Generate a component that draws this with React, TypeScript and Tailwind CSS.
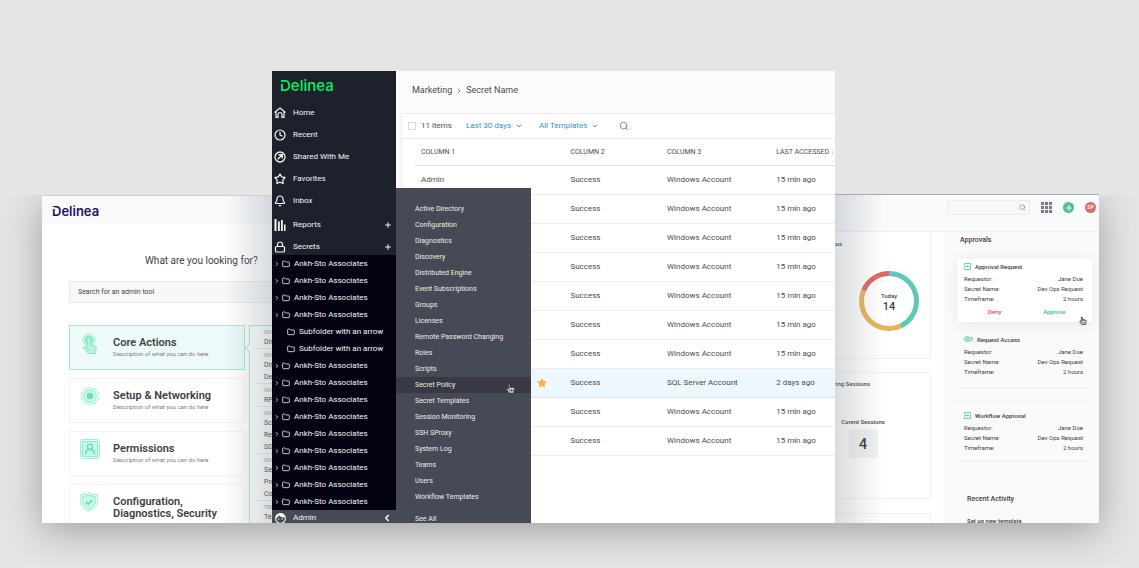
import { Fragment } from "react";
import {
  Bell,
  ChevronDown,
  ChevronLeft,
  ChevronRight,
  Clock,
  Folder,
  Lock,
  Plus,
  Search,
  Star,
} from "lucide-react";
import { FaHandPointer, FaRegHandPointer } from "react-icons/fa";
import { MdFace } from "react-icons/md";

const folders = [
  { name: "Ankh-Sto Associates" },
  { name: "Ankh-Sto Associates" },
  { name: "Ankh-Sto Associates" },
  { name: "Ankh-Sto Associates" },
  { name: "Subfolder with an arrow", child: true },
  { name: "Subfolder with an arrow", child: true },
  { name: "Ankh-Sto Associates" },
  { name: "Ankh-Sto Associates" },
  { name: "Ankh-Sto Associates" },
  { name: "Ankh-Sto Associates" },
  { name: "Ankh-Sto Associates" },
  { name: "Ankh-Sto Associates" },
  { name: "Ankh-Sto Associates" },
  { name: "Ankh-Sto Associates" },
  { name: "Ankh-Sto Associates" },
];

const adminLinks = [
  "Active Directory",
  "Configuration",
  "Diagnostics",
  "Discovery",
  "Distributed Engine",
  "Event Subscriptions",
  "Groups",
  "Licenses",
  "Remote Password Changing",
  "Roles",
  "Scripts",
  "Secret Policy",
  "Secret Templates",
  "Session Monitoring",
  "SSH SProxy",
  "System Log",
  "Teams",
  "Users",
  "Workflow Templates",
];

const rows = [
  { name: "Admin", type: "Windows Account", time: "15 min ago" },
  { name: "", type: "Windows Account", time: "15 min ago" },
  { name: "", type: "Windows Account", time: "15 min ago" },
  { name: "", type: "Windows Account", time: "15 min ago" },
  { name: "", type: "Windows Account", time: "15 min ago" },
  { name: "", type: "Windows Account", time: "15 min ago" },
  { name: "", type: "Windows Account", time: "15 min ago" },
  { name: "", type: "SQL Server Account", time: "2 days ago", starred: true },
  { name: "", type: "Windows Account", time: "15 min ago" },
  { name: "", type: "Windows Account", time: "15 min ago" },
];

const toolGroups = [
  { title: "ADV", items: ["Disc"] },
  { title: "ADV", items: ["Dist", "Dep"] },
  { title: "ADV", items: ["RPC"] },
  { title: "ADV", items: ["Scr", "Rem", "SDK"] },
  { title: "ADV", items: ["Ses", "Prox", "Con"] },
  { title: "TEM", items: ["Tem"] },
];

function Wordmark({ notch }: { notch: string }) {
  return (
    <span className="relative inline-block">
      Delinea
      <span className={`absolute left-0 top-[5px] h-[2px] w-[3px] ${notch}`} />
    </span>
  );
}

function HomeIcon() {
  return (
    <svg viewBox="0 0 24 24" className="size-3" fill="none" stroke="currentColor" strokeWidth="2.4">
      <path d="M1 11 12 2l11 9M4 9v12h4v-6a4 4 0 0 1 8 0v6h4V9" />
    </svg>
  );
}

function SharedIcon() {
  return (
    <svg viewBox="0 0 24 24" className="size-3" fill="none" stroke="currentColor" strokeWidth="2.6">
      <circle cx="12" cy="12" r="10" />
      <path d="M7.500 16.500 16 8M9 7.500h7.500V15" />
    </svg>
  );
}

function BarsIcon() {
  return (
    <svg viewBox="0 0 12 12" className="size-3" fill="currentColor">
      <path d="M.5 0h2v12h-2zM4 2.500h1.800V12H4zM7 1h1.800v11H7zM10 5.500h1.500V12H10z" />
    </svg>
  );
}

function ImportIcon() {
  return (
    <svg viewBox="0 0 14 14" className="size-[7px]" fill="none" stroke="#4ec0ad" strokeWidth="1.6">
      <path d="M1 5V1h12v12H1V9M1 7h8M6.500 4.300 9.300 7 6.500 9.700" />
    </svg>
  );
}

function AccessIcon() {
  return (
    <svg viewBox="0 0 18 12" className="h-[6px] w-[9px]" fill="none" stroke="#4ec0ad" strokeWidth="1.6">
      <circle cx="6" cy="6" r="5" />
      <circle cx="6" cy="6" r="2" />
      <circle cx="14" cy="7" r="3" />
      <path d="M16 1v4" />
    </svg>
  );
}

function TouchIcon() {
  return (
    <svg viewBox="0 0 20 22" className="h-[22px] w-5" fill="none" stroke="#7fe3c8">
      <circle cx="9" cy="7" r="6" fill="#c4f8e7" strokeDasharray="1.500 .6" strokeWidth=".8" />
      <circle cx="9" cy="7" r="3.300" strokeWidth="1.700" />
      <path
        d="M7.500 7.500a1.500 1.500 0 0 1 3 0V12l4 .8c1.400.3 2 1 1.800 2.300l-.8 5.400H8.300L4 15.500c-.8-1 .4-2.200 1.500-1.600l2 1.200z"
        fill="#b5f3df"
        strokeWidth=".9"
      />
    </svg>
  );
}

function GearIcon() {
  return (
    <svg viewBox="0 0 20 20" className="size-5" fill="none" stroke="#8de8d0">
      <path
        d="M10 .7 12.500 2.600 15.600 2.400 16.500 5.300 19.200 6.900 18.200 10 19.200 13.100 16.500 14.700 15.600 17.600 12.500 17.400 10 19.300 7.500 17.400 4.400 17.600 3.500 14.700.8 13.100 1.800 10 .8 6.900 3.500 5.300 4.400 2.400 7.500 2.600z"
        fill="#e4fdf6"
        strokeDasharray="1.600 .6"
        strokeWidth=".8"
      />
      <circle cx="10" cy="10" r="6.300" fill="#c4f8e7" strokeWidth=".9" />
      <circle cx="10" cy="10" r="3.200" fill="#6fdcc0" stroke="none" />
    </svg>
  );
}

function PersonIcon() {
  return (
    <svg viewBox="0 0 20 20" className="size-5" fill="none" stroke="#8de8d0">
      <rect x=".5" y=".5" width="19" height="19" rx="2" fill="#e9fdf7" strokeWidth=".8" />
      <rect x="2.500" y="2.500" width="15" height="15" fill="#c4f8e7" strokeWidth=".9" />
      <circle cx="10" cy="7.700" r="2.500" stroke="#6fdcc0" strokeWidth="1.400" />
      <path d="M5.500 15.500c0-3.500 1.700-5 4.500-5s4.500 1.500 4.500 5" stroke="#6fdcc0" strokeWidth="1.500" />
    </svg>
  );
}

function ShieldIcon() {
  return (
    <svg viewBox="0 0 18 20" className="h-5 w-[18px]" fill="none" stroke="#8de8d0">
      <path d="M9 .6 11 2.300l6.300.3V10c0 4.500-4 7.500-8.300 9.400C4.700 17.500.7 14.500.7 10V2.600L7 2.300z" fill="#e9fdf7" strokeWidth=".8" />
      <path d="M9 3.300 15.300 4.600V10c0 3.300-3 5.700-6.300 7.200C5.700 15.700 2.700 13.300 2.700 10V4.600z" fill="#c4f8e7" strokeWidth=".9" />
      <path d="m6 10 2.200 2.200 4-4" stroke="#6fdcc0" strokeWidth="1.800" />
    </svg>
  );
}

function ToolCard({ icon, title, active }: { icon: any; title: string; active?: boolean }) {
  return (
    <a
      href="#"
      className={`flex h-[45px] shrink-0 border pl-[10px] ${
        active ? "border-[#a9e8d8] bg-[#eefafa]" : "border-[#f1f2f2] bg-white"
      }`}
    >
      <span className="mt-[7px] w-[33px] shrink-0">{icon}</span>
      <span className="pt-[11px]">
        <span className="block text-[11px] leading-[12px] font-semibold">{title}</span>
        {title.length < 20 && (
          <span className="block text-[6px] leading-[10px] text-[#7c7c7c]">
            Description of what you can do here
          </span>
        )}
      </span>
    </a>
  );
}

function AdminPanel() {
  return (
    <section className="col-start-1 row-start-1 mt-[124px] flex overflow-hidden border-t border-[#cfd0d4] bg-white text-[#404040]">
      <div className="relative flex w-full flex-col">
        <header className="h-7 shrink-0 bg-[#f9fafc] pl-[10px] pt-[6px] font-[Inter] text-[13px] leading-[18px] font-semibold text-[#21145f]">
          <Wordmark notch="bg-[#f9fafc]" />
        </header>
        <h1 className="mt-[29px] shrink-0 pl-[103px] text-[10px] leading-4 whitespace-nowrap">
          What are you looking for?
        </h1>
        <div className="mt-3 ml-[27px] w-[300px] shrink-0">
          <input
            type="text"
            aria-label="Search for an admin tool"
            placeholder="Search for an admin tool"
            className="block h-[22px] w-full border border-[#e9ecee] bg-[#f6f8fa] pl-2 text-[7px] placeholder:text-[#444]"
          />
        </div>
        <div className="mt-[22px] ml-[27px] flex min-h-0 flex-1 gap-1">
          <div className="flex w-[176px] shrink-0 flex-col gap-2">
            <ToolCard icon={<TouchIcon />} title="Core Actions" active />
            <ToolCard icon={<GearIcon />} title="Setup & Networking" />
            <ToolCard icon={<PersonIcon />} title="Permissions" />
            <ToolCard icon={<ShieldIcon />} title="Configuration, Diagnostics, Security" />
          </div>
          <div className="relative flex-1 border-t border-l border-[#a9e8d8] pl-[6px]">
            <span className="absolute top-[19px] -left-[4px] size-[6px] rotate-45 border-b border-l border-[#a9e8d8] bg-white" />
            {toolGroups.map((group, i) => (
              <div key={i} className="border-b border-[#e8e9ea] pt-[3px] pl-2">
                <p className="text-[5px] leading-[7px] text-[#999]">{group.title}</p>
                {group.items.map((item) => (
                  <p key={item} className="text-[7px] leading-[12px]">
                    {item}
                  </p>
                ))}
              </div>
            ))}
          </div>
        </div>
        <div className="pointer-events-none absolute inset-y-0 right-0 w-12 bg-linear-to-l from-[#7d8a94]/30 to-transparent" />
      </div>
    </section>
  );
}

function SideItem({ icon, label, expandable }: { icon: any; label: string; expandable?: boolean }) {
  return (
    <li>
      <a href="#" className="flex h-4 items-center pr-1 pl-[2px]">
        <span className="w-[19px]">{icon}</span>
        <span className="flex-1">{label}</span>
        {expandable && <Plus className="size-2" strokeWidth={3} />}
      </a>
    </li>
  );
}

function Sidebar() {
  return (
    <nav className="flex w-[124px] shrink-0 flex-col overflow-hidden bg-[#1d212c] text-[8px] text-[#f4f5f7]">
      <div className="mt-[6px] h-7 shrink-0 pl-2 font-[Inter] text-[15px] leading-[18px] font-medium text-[#05f45e]">
        <Wordmark notch="bg-[#1d212c]" />
      </div>
      <ul className="flex shrink-0 flex-col gap-[6px]">
        <SideItem icon={<HomeIcon />} label="Home" />
        <SideItem icon={<Clock className="size-3" strokeWidth={2.4} />} label="Recent" />
        <SideItem icon={<SharedIcon />} label="Shared With Me" />
        <SideItem icon={<Star className="size-3" strokeWidth={2.4} />} label="Favorites" />
        <SideItem icon={<Bell className="size-3" strokeWidth={2.4} />} label="Inbox" />
      </ul>
      <ul className="mt-2 flex shrink-0 flex-col gap-[6px]">
        <SideItem icon={<BarsIcon />} label="Reports" expandable />
        <SideItem icon={<Lock className="size-3" strokeWidth={2.4} />} label="Secrets" expandable />
      </ul>
      <ul className="shrink-0 bg-[#020212]">
        {folders.map((folder, i) => (
          <li key={i}>
            <a
              href="#"
              className={`flex h-[17px] items-center whitespace-nowrap ${folder.child ? "pl-[15px]" : "pl-[2px]"}`}
            >
              {!folder.child && <ChevronRight className="mr-[2px] size-[6px]" strokeWidth={3} />}
              <Folder className="mr-1 size-2" strokeWidth={2.4} />
              {folder.name}
            </a>
          </li>
        ))}
      </ul>
      <a href="#" className="flex h-4 shrink-0 items-center bg-[#464a54] pr-1 pl-[2px]">
        <MdFace className="mr-[6px] size-[13px]" />
        <span className="flex-1">Admin</span>
        <ChevronLeft className="size-[10px]" strokeWidth={4} />
      </a>
    </nav>
  );
}

function Filter({ label }: { label: string }) {
  return (
    <span className="relative flex items-center text-[#2d95d6]">
      <select aria-label={label} className="appearance-none bg-transparent pr-[11px] outline-none">
        <option>{label}</option>
      </select>
      <ChevronDown className="pointer-events-none absolute right-0 size-2 text-[#666]" strokeWidth={2.4} />
    </span>
  );
}

function SecretsTable() {
  return (
    <table className="ml-[13px] w-[calc(100%-13px)] table-fixed border-collapse text-left">
      <colgroup>
        <col className="w-[37%]" />
        <col className="w-[23%]" />
        <col className="w-[26%]" />
        <col className="w-[14%]" />
      </colgroup>
      <thead>
        <tr className="h-[26px] border-b border-[#dfe0e1] text-[7px] whitespace-nowrap">
          <th className="pl-[6px] font-normal">COLUMN 1</th>
          <th className="font-normal">COLUMN 2</th>
          <th className="font-normal">COLUMN 3</th>
          <th className="font-normal">
            LAST ACCESSED <span className="text-[#35b6e0]">↓</span>
          </th>
        </tr>
      </thead>
      <tbody>
        {rows.map((row, i) => (
          <tr
            key={i}
            className={`h-[29px] border-b ${
              row.starred ? "border-[#d5e3ea] bg-[#eef7fe]" : "border-[#ededee]"
            }`}
          >
            <td className="pr-[23px] pl-[6px]">
              <span className="flex items-center justify-between">
                {row.name}
                {row.starred && <Star className="ml-auto size-[10px] fill-[#f8b434] text-[#f8b434]" />}
              </span>
            </td>
            <td>Success</td>
            <td>{row.type}</td>
            <td>{row.time}</td>
          </tr>
        ))}
      </tbody>
    </table>
  );
}

function AdminMenu() {
  return (
    <div className="absolute top-[117px] bottom-0 left-[124px] w-[135px] overflow-hidden bg-[#464a54] pt-[13px] text-[7px] text-[#eceded]">
      <ul>
        {adminLinks.map((link) => (
          <li key={link}>
            <a
              href="#"
              className={`flex h-4 items-center pl-[19px] whitespace-nowrap ${
                link === "Secret Policy" ? "bg-[#383942]" : ""
              }`}
            >
              {link}
              {link === "Secret Policy" && (
                <FaHandPointer
                  className="mt-[6px] mr-4 ml-auto size-[9px] overflow-visible text-white"
                  stroke="#222"
                  strokeWidth={40}
                />
              )}
            </a>
          </li>
        ))}
      </ul>
      <a href="#" className="mt-[6px] flex h-4 items-center pl-[19px]">
        See All
      </a>
    </div>
  );
}

function SecretsPanel() {
  return (
    <section className="relative z-10 col-start-2 row-start-1 flex overflow-hidden bg-white text-[#4c4c4c]">
      <Sidebar />
      <div className="flex min-w-0 flex-1 flex-col bg-[#fbfbfb] pl-[5px] text-[8px]">
        <div className="flex h-[42px] shrink-0 items-center gap-[3px] pb-[2px] pl-[11px] text-[9px]">
          <a href="#">Marketing</a>
          <ChevronRight className="size-2" strokeWidth={2} />
          <span>Secret Name</span>
        </div>
        <div className="flex-1 border-t border-l border-[#ececed] bg-white">
          <div className="flex h-[25px] items-center border-b border-[#ececed] pl-[6px] whitespace-nowrap">
            <input
              id="all-items"
              type="checkbox"
              className="mr-[5px] size-2 appearance-none border border-[#dcdcdc] bg-white"
            />
            <label htmlFor="all-items" className="mr-[14px]">
              11 items
            </label>
            <Filter label="Last 30 days" />
            <span className="w-4" />
            <Filter label="All Templates" />
            <button type="button" aria-label="Search" className="ml-5">
              <Search className="size-[10px] text-[#777]" />
            </button>
          </div>
          <SecretsTable />
        </div>
      </div>
      <AdminMenu />
    </section>
  );
}

function Request({ icon, title }: { icon: any; title: string }) {
  const fields = [
    ["Requestor:", "Jane Doe"],
    ["Secret Name:", "Dev Ops Request"],
    ["Timeframe:", "2 hours"],
  ];
  return (
    <div className="pr-[9px] pl-[7px] text-[6px]">
      <h3 className="mb-[3px] flex h-[10px] items-center gap-1 font-medium">
        {icon}
        {title}
      </h3>
      <dl className="grid grid-cols-2 leading-[10px]">
        {fields.map(([label, value]) => (
          <Fragment key={label}>
            <dt>{label}</dt>
            <dd className="text-right whitespace-nowrap">{value}</dd>
          </Fragment>
        ))}
      </dl>
    </div>
  );
}

function Donut() {
  return (
    <svg viewBox="0 0 60 60" className="size-[60px]" fill="none" strokeWidth="5">
      <g transform="rotate(-90 30 30)">
        <circle cx="30" cy="30" r="27.500" stroke="#5fc7ba" pathLength="360" strokeDasharray="155 205" />
        <circle cx="30" cy="30" r="27.500" stroke="#eab355" pathLength="360" strokeDasharray="138 222" strokeDashoffset="-155" />
        <circle cx="30" cy="30" r="27.500" stroke="#e06763" pathLength="360" strokeDasharray="67 293" strokeDashoffset="-293" />
      </g>
    </svg>
  );
}

function DashboardPanel() {
  return (
    <section className="relative col-start-3 row-start-1 mt-[123px] flex flex-col overflow-hidden border-t border-[#a9a9b3] bg-white text-[#3c3c3c]">
      <header className="flex h-[37px] shrink-0 items-start justify-end gap-[11px] border-b border-[#eeeff1] bg-[#f9fafc] pt-[5px] pr-[3px]">
        <span className="relative flex items-center">
          <input
            type="text"
            aria-label="Search"
            className="h-[15px] w-[83px] border border-[#ebecef] bg-[#f7f8fa] px-1 text-[7px] outline-none"
          />
          <Search className="absolute right-1 size-[7px] text-[#777]" />
        </span>
        <button type="button" aria-label="Apps" className="mt-[2px] text-[#747b88]">
          <svg viewBox="0 0 11 11" className="size-[11px]" fill="currentColor">
            <path d="M0 0h3v3H0zM4 0h3v3H4zM8 0h3v3H8zM0 4h3v3H0zM4 4h3v3H4zM8 4h3v3H8zM0 8h3v3H0zM4 8h3v3H4zM8 8h3v3H8z" />
          </svg>
        </button>
        <button
          type="button"
          aria-label="Add"
          className="mt-[2px] flex size-[11px] items-center justify-center rounded-full bg-[#55bb9f] text-white"
        >
          <Plus className="size-2" strokeWidth={3} />
        </button>
        <button
          type="button"
          className="mt-[2px] flex size-[11px] items-center justify-center rounded-full bg-[#e06763] text-[5px] font-bold text-white"
        >
          SP
        </button>
      </header>
      <div className="flex min-h-0 flex-1">
        <div className="flex min-w-0 flex-1 flex-col pr-3">
          <div className="h-[127px] shrink-0 border-r border-b border-[#f0f1f2]">
            <h3 className="flex w-[7px] justify-end pt-[7px] text-[6px] leading-[10px] font-medium">Status</h3>
            <div className="mt-[22px] ml-6 grid size-[60px] place-items-center">
              <span className="col-start-1 row-start-1">
                <Donut />
              </span>
              <p className="col-start-1 row-start-1 pt-1 text-center text-[6px] leading-[8px] font-medium">
                Today
                <span className="block text-[11px] leading-[14px]">14</span>
              </p>
            </div>
          </div>
          <div className="mt-[13px] h-[127px] shrink-0 border-y border-r border-[#f0f1f2]">
            <h3 className="flex w-[35px] justify-end pt-[6px] text-[6px] leading-[10px] font-medium whitespace-nowrap">
              Monitoring Sessions
            </h3>
            <div className="mt-7 ml-2 flex w-10 flex-col items-center text-[6px] leading-[10px] font-medium">
              <span className="whitespace-nowrap">Curent Sessions</span>
              <span className="mt-[2px] flex size-[29px] items-center justify-center rounded-[2px] bg-[#f1f1f2] text-[15px]">
                4
              </span>
            </div>
          </div>
          <div className="mt-[14px] h-10 shrink-0 border-t border-r border-[#f0f1f2]" />
        </div>
        <aside className="w-[156px] shrink-0 bg-[#fafafa] pt-[3px] pr-[7px] pl-[14px]">
          <h2 className="pl-[3px] text-[7px] leading-[10px] font-medium">Approvals</h2>
          <div className="relative mt-[14px] h-[63px] rounded-[2px] bg-white pt-[2px] shadow-[0_2px_14px_rgba(0,0,0,0.08)]">
            <Request icon={<ImportIcon />} title="Approval Request" />
            <div className="mt-[3px] grid grid-cols-2 pr-2 pl-2 text-[6px] leading-[10px] font-medium">
              <button type="button" className="text-[#e0504c]">
                Deny
              </button>
              <button type="button" className="text-[#3fb5a2]">
                Approve
              </button>
            </div>
            <FaRegHandPointer className="absolute right-[5px] -bottom-[3px] size-2 text-[#333]" />
          </div>
          <div className="mt-3 border-b border-[#f0f0f0] pb-[10px]">
            <Request icon={<AccessIcon />} title="Request Access" />
          </div>
          <div className="mt-[13px] border-y border-[#f0f0f0] pt-2 pb-2">
            <Request icon={<ImportIcon />} title="Workflow Approval" />
          </div>
          <h2 className="mt-8 pl-[10px] text-[7px] leading-[10px] font-medium">Recent Activity</h2>
          <p className="mt-3 pl-[10px] text-[6px] leading-[10px] font-medium">Set up new template</p>
        </aside>
      </div>
      <div className="pointer-events-none absolute inset-y-0 left-0 w-12 bg-linear-to-r from-[#7d8a94]/30 to-transparent" />
    </section>
  );
}

function App() {
  return (
    <main className="grid h-screen grid-cols-[230fr_563fr_264fr] grid-rows-[minmax(0,1fr)] overflow-hidden bg-[#e5e5e5] pt-[71px] pr-10 pb-[45px] pl-[42px] font-[Roboto,sans-serif]">
      {/* shared drop shadow, cut off level with the top of the side panels */}
      <div className="col-span-3 col-start-1 row-start-1 mt-[124px] shadow-[0_8px_36px_rgba(70,75,80,0.45)] [clip-path:inset(0_-80px_-80px_-80px)]" />
      <AdminPanel />
      <SecretsPanel />
      <DashboardPanel />
    </main>
  );
}

export default App;
